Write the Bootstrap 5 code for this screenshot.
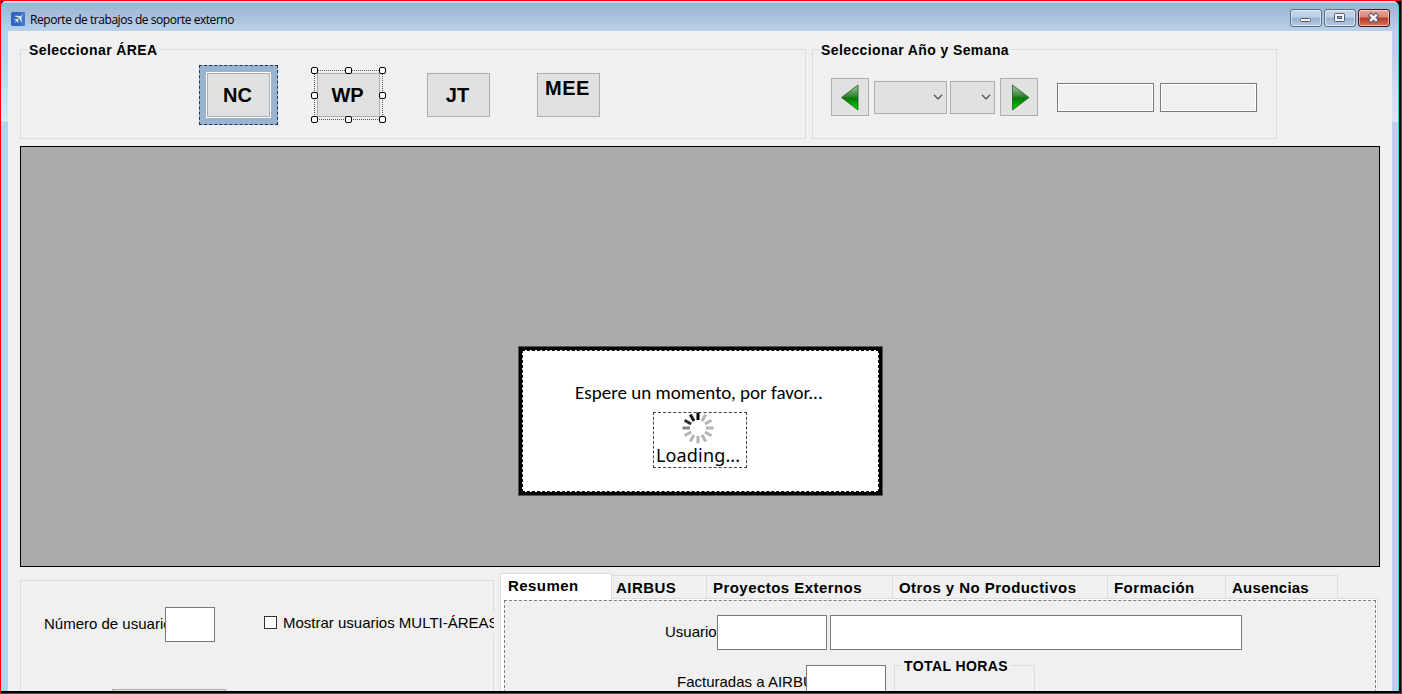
<!DOCTYPE html>
<html lang="es">
<head>
<meta charset="utf-8">
<title>Reporte de trabajos de soporte externo</title>
<link rel="stylesheet" href="https://cdn.jsdelivr.net/npm/bootstrap@5.3.0/dist/css/bootstrap.min.css">
<style>
body{width:1402px;height:694px;overflow:hidden;background:#000;color:#000;font:15px/18px "Liberation Sans",Arial,sans-serif}
.desk{width:1402px;height:694px;border:1px solid #f00}
.win{width:1398px;height:690px;border-right:1px solid #3fd0f5;border-radius:5px 6px 0 0;background:linear-gradient(#e9f1f9 0 1px,#9ab4d0 2px,#b9d1ea 30px,#b9d1ea 50px,#d9e7f5 118px,#dfeaf6 120px,#b9d1ea 121px)}
.titlebar{height:30px;padding:0 8px 0 10px;background:linear-gradient(#dfe9f3 0 1px,#99b4d1 2px,#b9d1ea);border-radius:5px 5px 0 0}
.app-icon{margin-top:11px}
.titlebar .caption{font:12px/16px "Open Sans","Noto Sans",sans-serif;letter-spacing:-.45px;margin:11px 0 0 5px;white-space:nowrap}
.client{margin-left:7px;width:1384px;height:660px;background:#f0f0f0;padding:18px 12px 0;overflow:hidden}
.winbtns{gap:2px;margin-top:8px}
.winbtn{width:32px;height:18px;border:1px solid #5b6d85;border-radius:3px;background:linear-gradient(#c4d6e9 0,#bbcfe4 45%,#98b1cd 50%,#b4cce6);box-shadow:inset 0 0 0 1px #ffffff80}
.winbtn.close-x{border-color:#4b1018;background:linear-gradient(#e9a99d,#d98676 45%,#b83a24 50%,#d4745c)}
.groupbox{border:1px solid #dcdcdc}
.legend-txt{position:absolute;top:-9px;left:6px;padding:0 2px;background:#f0f0f0;white-space:nowrap}
.hd{font-weight:700;font-size:14px;line-height:18px;letter-spacing:.4px;white-space:nowrap}
.wbtn{border:1px solid #adadad;background:#e1e1e1;color:#000;width:63px;height:44px;font-weight:700;font-size:20px;line-height:42px;text-align:center;padding:0 2px 0 0;position:relative}
.wbtn.high{line-height:28px;padding-bottom:14px;letter-spacing:.5px}
.wbtn.focused{box-shadow:0 0 0 1px #fff,0 0 0 8px #99b4d1;outline:1px dashed #1f3654;outline-offset:7px}
.wbtn svg{position:absolute;left:-7px;top:-7px}
.arrow-btn{width:38px;height:38px;border:1px solid #adadad;background:#e1e1e1}
.combo{height:33px;border:1px solid #adadad;background:#e1e1e1;padding-right:3px}
.ro{width:97px;height:29px;border:1px solid #7a7a7a;background:#f0f0f0;box-shadow:inset 0 0 0 1px #fff}
.txt{border:1px solid #7a7a7a;background:#fff;height:35px;flex:none}
.mdi{height:421px;margin-top:7px;border:1px solid #000;background:#ababab;padding-top:199px}
.dialog{width:365px;height:150px;margin-left:497px;border:1px solid #555;background:#000;padding:3px}
.dialog-in{height:142px;border:1px dashed #000;background:#fff;padding-top:31px}
.espere{font:19px/22px Carlito,"Open Sans",sans-serif;margin-left:52px;white-space:nowrap;width:max-content}
.loader{width:94px;height:56px;margin:8px 0 0 130px;border:1px dashed #444}
.loader svg{margin:-2px 0 0 27px}
.loader .ld{font:18px/20px "Noto Sans",sans-serif;letter-spacing:.15px;white-space:nowrap;margin:0 0 0 2px}
.leftbox{width:474px;height:140px;margin-top:7px;padding:26px 0 0 23px}
.clip-lbl{overflow:hidden;white-space:nowrap;flex:none}
.chk{width:13px;height:13px;border:1px solid #333;background:#fff;flex:none;margin:9px 0 0 49px}
.tabstrip{height:26px}
.tb{height:24px;border:1px solid #dcdcdc;border-left:0;border-bottom:0;padding:3px 0 0 6px;overflow:hidden;font-size:15px;letter-spacing:.45px}
.tb.on{height:27px;margin-bottom:-1px;width:112px;border-left:1px solid #dcdcdc;background:#fff;padding:3px 0 0 7px;position:relative;z-index:1}
.tabpage{width:878px;height:110px;margin-top:-1px;border:1px solid #dcdcdc;background:#fff;padding:1px 1px 0 3px}
.tabpage-in{height:108px;border:1px dashed #808080;background:#f0f0f0;padding-top:14px}
.stub{width:114px;height:20px;border:1px solid #adadad;background:#e1e1e1;margin:47px 0 0 68px}
.bottomline{height:2px;background:#000}
</style>
</head>
<body>
<div class="desk">
<div class="win">
  <div class="titlebar d-flex align-items-start">
    <svg class="app-icon" width="14" height="14" viewBox="0 0 14 14"><rect width="14" height="14" rx="1.500" fill="#2f66bd"/><path d="M9.500 0H12.500A1.500 1.500 0 0 1 14 1.500V12.500A1.500 1.500 0 0 1 12.500 14H9.500z" fill="#3f78cf"/><path d="M3 11.300L5.300 8.300 3 7.600l.7-.7 3 .2L8 5.700 3.800 4.400l.8-.8 5 .6 1.600-1.300.5.500L10.400 5l.4 4.600-.8.800L8.700 6.400 7.300 7.700l.1 3-.7.600-.8-2.200z" fill="#e0e6ee"/></svg>
    <span class="caption">Reporte de trabajos de soporte externo</span>
    <div class="winbtns d-flex ms-auto">
      <div class="winbtn"><svg width="30" height="16" class="d-block"><rect x="9.500" y="8.500" width="10" height="3" rx="1" fill="#f4f4f4" stroke="#555b6e"/></svg></div>
      <div class="winbtn"><svg width="30" height="16" class="d-block"><rect x="9.500" y="3.500" width="10" height="8" rx="1" fill="#f4f4f4" stroke="#555b6e"/><rect x="12.500" y="6.500" width="4" height="2" fill="#9ab4d0" stroke="#555b6e"/></svg></div>
      <div class="winbtn close-x"><svg width="30" height="16" class="d-block"><path d="M10.500 4L18.500 11.500M18.500 4L10.500 11.500" stroke="#555b6e" stroke-width="4.600"/><path d="M11.200 4.600L17.800 10.900M17.800 4.600L11.200 10.900" stroke="#f6f6f6" stroke-width="2.600"/></svg></div>
    </div>
  </div>
  <div class="client">
    <div class="d-flex" style="gap:6px;height:90px">
      <div class="groupbox position-relative d-flex" style="width:786px;gap:47px;padding:23px 0 0 186px">
        <span class="legend-txt hd">Seleccionar ÁREA</span>
        <button class="wbtn focused">NC</button>
        <button class="wbtn">WP
          <svg width="76" height="57" viewBox="0 0 76 57"><rect x="3.500" y="3.500" width="68" height="49" fill="none" stroke="#555" stroke-dasharray="1 1" stroke-dashoffset=".5" shape-rendering="crispEdges"/><g fill="#fff" stroke="#000"><rect x="0.500" y="0.500" width="6" height="6" rx="1.500"/><rect x="34.500" y="0.500" width="6" height="6" rx="1.500"/><rect x="68.500" y="0.500" width="6" height="6" rx="1.500"/><rect x="0.500" y="25.500" width="6" height="6" rx="1.500"/><rect x="68.500" y="25.500" width="6" height="6" rx="1.500"/><rect x="0.500" y="49.500" width="6" height="6" rx="1.500"/><rect x="34.500" y="49.500" width="6" height="6" rx="1.500"/><rect x="68.500" y="49.500" width="6" height="6" rx="1.500"/></g></svg>
        </button>
        <button class="wbtn">JT</button>
        <button class="wbtn high">MEE</button>
      </div>
      <div class="groupbox position-relative d-flex align-items-center" style="width:465px;padding:6px 0 0 18px">
        <span class="legend-txt hd">Seleccionar Año y Semana</span>
        <div class="arrow-btn"><svg width="36" height="36" class="d-block"><defs><linearGradient id="g" x1="0" y1="0" x2="0" y2="1"><stop offset="0" stop-color="#a5d0a5"/><stop offset=".48" stop-color="#2c7d2c"/><stop offset=".52" stop-color="#057805"/><stop offset="1" stop-color="#00d800"/></linearGradient></defs><path d="M9.500 18.500L26 6V31z" fill="url(#g)" stroke="#1d5a1d" stroke-width=".8"/></svg></div>
        <div class="combo d-flex align-items-center justify-content-end" style="width:73px;margin-left:5px"><svg width="10" height="6"><path d="M1 .8L5 4.800 9 .8" fill="none" stroke="#444" stroke-width="1.200"/></svg></div>
        <div class="combo d-flex align-items-center justify-content-end" style="width:45px;margin-left:3px"><svg width="10" height="6"><path d="M1 .8L5 4.800 9 .8" fill="none" stroke="#444" stroke-width="1.200"/></svg></div>
        <div class="arrow-btn" style="margin-left:5px"><svg width="36" height="36" class="d-block"><path d="M28 18.500L11.500 6V31z" fill="url(#g)" stroke="#1d5a1d" stroke-width=".8"/></svg></div>
        <div class="ro" style="margin-left:19px"></div>
        <div class="ro" style="margin-left:6px"></div>
      </div>
    </div>
    <div class="mdi">
      <div class="dialog"><div class="dialog-in">
        <div class="espere">Espere un momento, por favor...</div>
        <div class="loader">
          <svg width="34" height="34" viewBox="-17 -17 34 34" class="d-block" stroke="#b4b4b4" stroke-width="3"><path d="M0-15.500V-8" stroke="#000"/><path d="M0-15.500V-8" transform="rotate(30)"/><path d="M0-15.500V-8" transform="rotate(60)"/><path d="M0-15.500V-8" transform="rotate(90)"/><path d="M0-15.500V-8" transform="rotate(120)"/><path d="M0-15.500V-8" transform="rotate(150)"/><path d="M0-15.500V-8" transform="rotate(180)"/><path d="M0-15.500V-8" transform="rotate(210)"/><path d="M0-15.500V-8" transform="rotate(240)"/><path d="M0-15.500V-8" transform="rotate(270)" stroke="#858585"/><path d="M0-15.500V-8" transform="rotate(300)" stroke="#303030"/><path d="M0-15.500V-8" transform="rotate(330)" stroke="#181818"/></svg>
          <div class="ld">Loading...</div>
        </div>
      </div></div>
    </div>
    <div class="d-flex" style="margin-top:6px;gap:6px">
      <div class="groupbox leftbox">
        <div class="d-flex">
          <div class="clip-lbl" style="width:121px;padding-top:8px">Número de usuario</div>
          <div class="txt" style="width:50px"></div>
          <div class="chk"></div>
          <div class="clip-lbl" style="width:217px;background:#f0f0f0;margin:5px 0 8px;padding:2px 0 0 6px">Mostrar usuarios MULTI-ÁREAS</div>
        </div>
        <div class="stub"></div>
      </div>
      <div>
        <div class="tabstrip d-flex align-items-end">
          <div class="tb on hd">Resumen</div>
          <div class="tb hd" style="width:95px;padding-left:4px">AIRBUS</div>
          <div class="tb hd" style="width:186px">Proyectos Externos</div>
          <div class="tb hd" style="width:215px">Otros y No Productivos</div>
          <div class="tb hd" style="width:118px">Formación</div>
          <div class="tb hd" style="width:112px;letter-spacing:.2px">Ausencias</div>
        </div>
        <div class="tabpage"><div class="tabpage-in">
          <div class="d-flex" style="padding-left:160px">
            <div class="clip-lbl" style="width:52px;padding-top:8px">Usuario</div>
            <div class="txt" style="width:110px"></div>
            <div class="txt" style="width:412px;margin-left:3px"></div>
          </div>
          <div class="d-flex" style="padding-left:172px;margin-top:15px">
            <div class="clip-lbl" style="width:129px;padding-top:8px">Facturadas a AIRBUS</div>
            <div class="txt" style="width:80px"></div>
            <div class="groupbox position-relative" style="width:141px;height:60px;margin-left:8px"><span class="legend-txt hd" style="padding-left:3px">TOTAL HORAS</span></div>
          </div>
        </div></div>
      </div>
    </div>
  </div>
</div>
<div class="bottomline"></div>
</div>
<script src="https://cdn.jsdelivr.net/npm/bootstrap@5.3.0/dist/js/bootstrap.bundle.min.js"></script>
</body>
</html>
